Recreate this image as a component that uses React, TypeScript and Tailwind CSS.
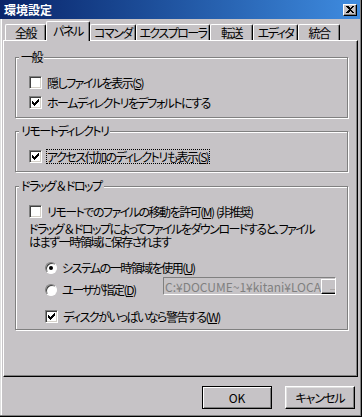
import React from 'react';

const checkPixels: [number, number, number][] = [
    // [row, fromX, toX]
    [0, 6, 6],
    [1, 5, 6],
    [2, 0, 0],
    [2, 4, 6],
    [3, 0, 1],
    [3, 3, 5],
    [4, 0, 4],
    [5, 1, 3],
    [6, 2, 2],
];

const CheckBox = ({ checked }: { checked?: boolean }) => (
    <span className="w-[13px] h-[13px] shrink-0 flex items-center justify-center bg-white border border-t-[#808080] border-l-[#808080] border-r-white border-b-white shadow-[inset_1px_1px_0_#404040,inset_-1px_-1px_0_#d4d0c8]">
        {checked && (
            <svg width="7" height="7" viewBox="0 0 7 7" shapeRendering="crispEdges">
                {checkPixels.map(([y, a, b], i) => (
                    <rect key={i} x={a} y={y} width={b - a + 1} height={1} fill="#000" />
                ))}
            </svg>
        )}
    </span>
);

const Radio = ({ checked }: { checked?: boolean }) => (
    <span className="w-[12px] h-[12px] shrink-0 rounded-full flex items-center justify-center bg-white border border-t-[#808080] border-l-[#808080] border-r-white border-b-white shadow-[inset_1px_1px_0_#404040]">
        {checked && <span className="w-[4px] h-[4px] rounded-full bg-black" />}
    </span>
);

const Key = ({ k }: { k: string }) => (
    <>
        (<u>{k}</u>)
    </>
);

const Option = ({
    box,
    focused,
    children,
}: {
    box: React.ReactNode;
    focused?: boolean;
    children: React.ReactNode;
}) => (
    <div className="flex items-center h-[13px]">
        {box}
        <span
            className={`ml-[4px] pr-[1px] leading-[13px] whitespace-nowrap border border-dotted ${
                focused ? 'border-black' : 'border-transparent'
            }`}
        >
            {children}
        </span>
    </div>
);

const Group = ({
    title,
    className,
    children,
}: {
    title: string;
    className?: string;
    children: React.ReactNode;
}) => (
    <div className={`relative w-[333px] ml-[11px] border border-[#808080] shadow-[1px_1px_0_#fff,inset_1px_1px_0_#fff] ${className}`}>
        <span className="absolute -top-[8px] left-[3px] px-[2px] bg-[#c6c3c6] leading-[13px] whitespace-nowrap">
            {title}
        </span>
        {children}
    </div>
);

const tabs = [
    { label: '全般', w: 'w-[41px]' },
    { label: 'パネル', w: 'w-[44px]', active: true },
    { label: 'コマンダ', w: 'w-[46px]' },
    { label: 'エクスプローラ', w: 'w-[74px]' },
    { label: '転送', w: 'w-[43px]' },
    { label: 'エディタ', w: 'w-[45px]' },
    { label: '統合', w: 'w-[42px]' },
];

export default function App() {
    return (
        <div className="w-[362px] h-[417px] bg-[#c6c3c6] text-black text-[12px] tracking-[-1.5px] font-['Noto_Sans_CJK_JP',sans-serif] [font-feature-settings:'palt'] border-r border-b border-black overflow-hidden">
            <div className="h-full flex flex-col border-r border-b border-[#808080]">
                {/* title bar */}
                <div className="h-[19px] shrink-0 flex items-center justify-between pl-[4px] pr-[3px] bg-gradient-to-r from-[#0a246a] to-[#3f8ce0]">
                    <span className="text-white font-bold text-[12px] leading-[14px] tracking-[0px]">環境設定</span>
                    <span className="w-[14px] h-[12px] flex items-center justify-center bg-[#c6c3c6] border border-t-white border-l-white border-r-black border-b-black shadow-[inset_-1px_-1px_0_#808080]">
                        <svg width="8" height="7" viewBox="0 0 8 7" shapeRendering="crispEdges">
                            <path d="M0 0h2l2 2l2-2h2l-3 3.5l3 3.5h-2l-2-2l-2 2h-2l3-3.5z" fill="#000" />
                        </svg>
                    </span>
                </div>

                {/* body */}
                <div className="flex-1 flex flex-col border-l border-[#dfdfdf]">
                    <div className="flex-1 flex flex-col border-l border-white pl-[1px]">
                        {/* tabs */}
                        <div className="h-[21px] flex items-end pl-[2px]">
                            {tabs.map((t) =>
                                t.active ? (
                                    <div
                                        key={t.label}
                                        className={`${t.w} h-[20px] -mb-[1px] relative z-10 flex items-center justify-center pb-[2px] whitespace-nowrap bg-[#c6c3c6] border-l border-t border-white border-r border-r-black rounded-t-[2px] shadow-[inset_-1px_0_0_#808080]`}
                                    >
                                        {t.label}
                                    </div>
                                ) : (
                                    <div
                                        key={t.label}
                                        className={`${t.w} h-[16px] flex items-center justify-center whitespace-nowrap bg-[#c6c3c6] border-l border-t border-white border-r border-r-black rounded-t-[2px] shadow-[inset_-1px_0_0_#808080] leading-[13px]`}
                                    >
                                        {t.label}
                                    </div>
                                )
                            )}
                        </div>

                        {/* tab panel */}
                        <div className="w-[355px] h-[337px] flex flex-col border border-t-white border-l-white border-r-black border-b-black shadow-[inset_-1px_-1px_0_#808080]">
                            <Group title="一般" className="mt-[16px] h-[61px]">
                                <div className="flex flex-col gap-[7px] pt-[18px] pl-[13px]">
                                    <Option box={<CheckBox />}>
                                        隠しファイルを表示<Key k="S" />
                                    </Option>
                                    <Option box={<CheckBox checked />}>
                                        ホームディレクトリをデフォルトにする
                                    </Option>
                                </div>
                            </Group>

                            <Group title="リモートディレクトリ" className="mt-[13px] h-[41px]">
                                <div className="pt-[18px] pl-[13px]">
                                    <Option box={<CheckBox checked />} focused>
                                        アクセス付加のディレクトリも表示<Key k="S" />
                                    </Option>
                                </div>
                            </Group>

                            <Group title="ドラッグ ＆ ドロップ" className="mt-[14px] h-[144px]">
                                <div className="flex flex-col pt-[18px] pl-[13px]">
                                    <Option box={<CheckBox />}>
                                        リモートでのファイルの移動を許可<Key k="M" />&nbsp; (非推奨)
                                    </Option>
                                    <p className="mt-[4px] leading-[13px] whitespace-nowrap">
                                        ドラッグ ＆ ドロップによってファイルをダウンロードすると、ファイル
                                        <br />
                                        はまず一時領域に保存されます
                                    </p>
                                    <div className="mt-[13px] pl-[16px]">
                                        <Option box={<Radio checked />}>
                                            システムの一時領域を使用<Key k="U" />
                                        </Option>
                                    </div>
                                    <div className="mt-[3px] pl-[16px] flex items-start">
                                        <div className="w-[118px] pt-[6px]">
                                            <Option box={<Radio />}>
                                                ユーザが指定<Key k="D" />
                                            </Option>
                                        </div>
                                        <div className="w-[173px] h-[18px] flex items-center justify-between overflow-hidden border border-t-[#808080] border-l-[#808080] border-r-white border-b-white">
                                            <span className="pl-[1px] text-[#808080] whitespace-nowrap leading-[13px] tracking-[0px] [font-feature-settings:normal]">
                                                C:¥DOCUME~1¥kitani¥LOCA
                                            </span>
                                            <span className="w-[24px] h-[15px] shrink-0 flex items-end justify-center pb-[3px] bg-[#c6c3c6] border border-t-white border-l-white border-r-black border-b-black shadow-[inset_-1px_-1px_0_#808080] text-[#808080] text-[7px] leading-[6px] tracking-[0px]">
                                                ...
                                            </span>
                                        </div>
                                    </div>
                                    <div className="mt-[14px] pl-[16px]">
                                        <Option box={<CheckBox checked />}>
                                            ディスクがいっぱいなら警告する<Key k="W" />
                                        </Option>
                                    </div>
                                </div>
                            </Group>
                        </div>

                        {/* buttons */}
                        <div className="mt-[9px] flex justify-end gap-[13px] pr-[5px]">
                            <button className="w-[70px] h-[23px] bg-[#c6c3c6] border border-black shadow-[inset_1px_1px_0_#fff,inset_-1px_-1px_0_#808080] leading-[13px] tracking-[0px]">
                                OK
                            </button>
                            <button className="w-[70px] h-[23px] bg-[#c6c3c6] border border-t-white border-l-white border-r-black border-b-black shadow-[inset_-1px_-1px_0_#808080,inset_1px_1px_0_#dfdfdf] leading-[13px] tracking-[-1px]">
                                キャンセル
                            </button>
                        </div>
                    </div>
                </div>
            </div>
        </div>
    );
}
